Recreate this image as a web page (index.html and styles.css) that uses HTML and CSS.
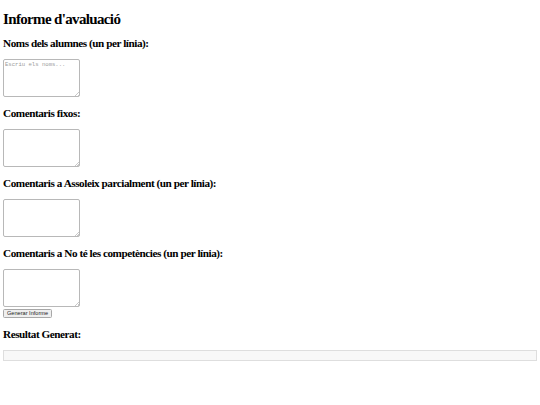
FILE: index.html
```html
<!DOCTYPE html>
<html lang="ca">
<head>
<meta charset="utf-8">
<title>Informe d'avaluació</title>
<link rel="stylesheet" href="styles.css">
</head>
<body>
<h2 class="title">Informe d'avaluació</h2>
<h3 class="label">Noms dels alumnes (un per línia):</h3>
<textarea class="field" placeholder="Escriu els noms..."></textarea>
<h3 class="label">Comentaris fixos:</h3>
<textarea class="field"></textarea>
<h3 class="label">Comentaris a Assoleix parcialment (un per línia):</h3>
<textarea class="field"></textarea>
<h3 class="label">Comentaris a No té les competències (un per línia):</h3>
<textarea class="field"></textarea>
<button class="btn" type="button">Generar Informe</button>
<h3 class="label">Resultat Generat:</h3>
<div class="result"></div>
</body>
</html>
```
FILE: styles.css
```css
html, body {
  background: #ffffff;
}
body {
  margin: 0;
  padding: 11px 3px 0 3px;
  font-family: "Liberation Serif", "Times New Roman", serif;
  color: #000;
}
.title {
  margin: 0 0 10px 0;
  font-size: 15px;
  line-height: 16px;
  letter-spacing: -0.65px;
  font-weight: bold;
}
.label {
  margin: 10px 0;
  font-size: 11.2px;
  line-height: 12px;
  letter-spacing: -0.45px;
  font-weight: bold;
}
.field {
  display: block;
  box-sizing: border-box;
  width: 77px;
  height: 38px;
  margin: 0;
  padding: 1px;
  border: 1px solid #b8b8b8;
  border-radius: 2px;
  font-family: "Liberation Mono", "DejaVu Sans Mono", monospace;
  font-size: 5.6px;
  line-height: 7px;
  resize: none;
  background-color: #fff;
  background-image: linear-gradient(135deg, transparent 0 55%, #c8c8c8 55% 68%, transparent 68% 80%, #c8c8c8 80% 92%, transparent 92%);
  background-size: 5px 5px;
  background-position: right 0 bottom 0;
  background-repeat: no-repeat;
}
.field::placeholder {
  color: #9a9a9a;
}
.btn {
  display: block;
  margin: 2px 0 0 0;
  box-sizing: border-box;
  height: 9px;
  padding: 0 3px;
  font-family: "Liberation Sans", Arial, sans-serif;
  font-size: 5.6px;
  line-height: 7px;
  color: #222;
  background: #efefef;
  border: 1px solid #a8a8a8;
  border-radius: 1.5px;
}
.result {
  box-sizing: border-box;
  width: 534px;
  height: 11px;
  background: #f8f8f8;
  border: 1px solid #dedede;
}
```
